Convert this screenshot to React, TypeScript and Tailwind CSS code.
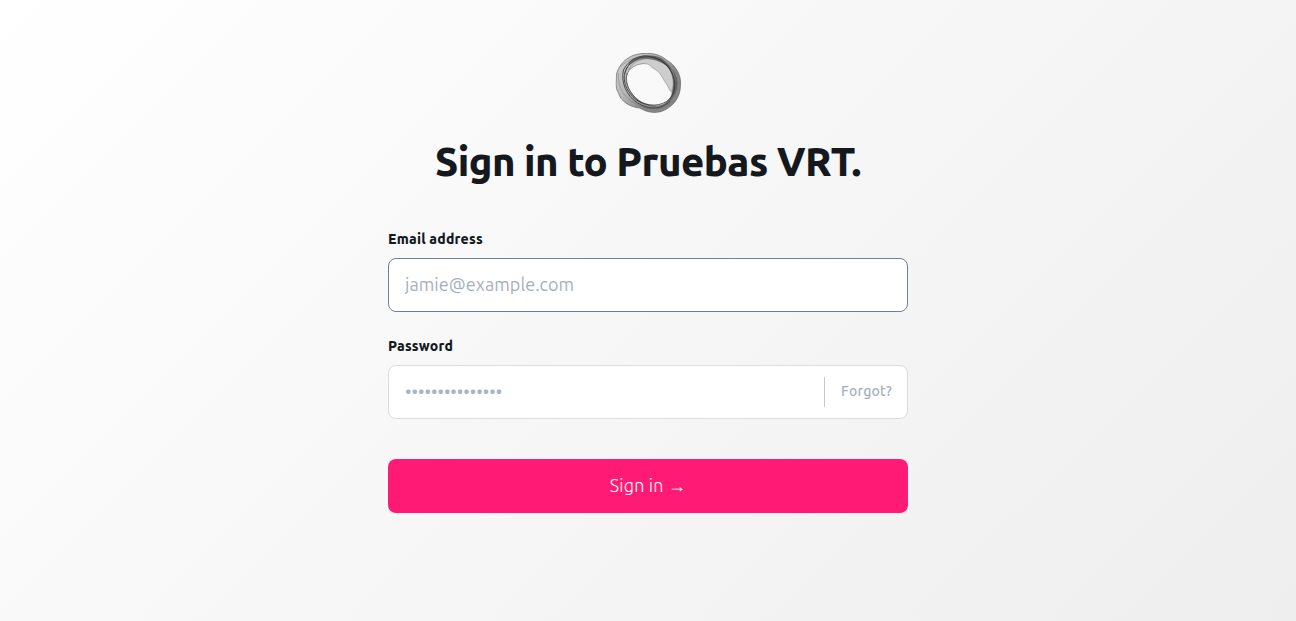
import React from "react";

function RingLogo() {
  return (
    <svg className="translate-x-[0.5px]" width="66" height="60" viewBox="0 0 66 60" fill="none" aria-hidden="true">
      <defs>
        <linearGradient id="ring" x1="0" y1="0" x2="1" y2="0.7">
          <stop offset="0" stopColor="#cfcfcf" />
          <stop offset="0.4" stopColor="#b8b8b8" />
          <stop offset="0.75" stopColor="#868686" />
          <stop offset="1" stopColor="#858585" />
        </linearGradient>
      </defs>
      <path
        fillRule="evenodd"
        fill="url(#ring)"
        stroke="#666"
        strokeWidth="0.7"
        d="M25 .7C35-.5 44 1 51 7C60 12 66 22 65 32C65 45 57 54 47 58C39 61 31 59 24 55C14 54 5 48 3 40C-1 34 1 27 1 21C4 10 13 2 25 .7Z M27 10.500C18 11 11.500 17 10.500 26C11 35 17 44 26 49C35 54 45 54 50 50.500C56 46 57.500 39 57 33C54 24 51 18 43 12C38 9 33 9 27 10.500Z"
      />
      <path
        fill="#cdcdcd"
        stroke="#8a8a8a"
        strokeWidth="0.6"
        d="M13 17C20 11 29 9 34 12C37 16 41 16 44 20C47 24 48 27 51 31C53 34 54 38 56 39C60 29 57 17 48 10C37 3 20 4 13 17Z"
      />
      <path
        fill="#4c4c4c"
        fillOpacity="0.65"
        d="M14 9C20 3 30 1 40 3C47 4 54 11 58 19C51 11 42 7 33 6C24 5 17 9 11 15Z"
      />
      <path
        fill="#505050"
        fillOpacity="0.6"
        d="M27 50C37 56 48 54 55 45C61 37 60 25 57 16C64 26 63 37 57 45C48 55 37 55 27 50Z"
      />
      <g stroke="#303030" strokeWidth="0.9" strokeOpacity="0.9">
        <path d="M8 17C5 29 11 43 22 50C34 57 45 57 55 48" />
        <path d="M12 14C5 25 10 38 21 47C32 54 46 54 54 46C60 40 61 29 56 19C50 8 39 3 28 3C19 4 12 9 8 17" />
        <path d="M9 21C11 12 19 5 29 4C41 3 51 8 56 19C59 26 59 34 57 41" strokeWidth="0.6" />
        <path d="M11.500 20C9 32 16 43 26 50" strokeWidth="0.6" />
      </g>
      <path
        d="M3 20C2 32 7 43 16 48C27 57 45 59 55 50M5 14C15 3 35 0 48 7M61 24C64 39 56 50 44 55"
        stroke="#555"
        strokeOpacity="0.5"
        strokeWidth="0.6"
      />
    </svg>
  );
}

export default function App() {
  return (
    <main className="flex min-h-screen flex-col items-center bg-[linear-gradient(135deg,#ffffff_0%,#eeeeee_100%)] pt-[53px] font-['Ubuntu','Noto_Sans',sans-serif] text-[#15191e]">
      <RingLogo />
      <h1 className="mt-[19px] text-[40px] leading-[60px] font-extrabold tracking-[-0.55px] whitespace-nowrap">
        Sign in to Pruebas VRT.
      </h1>
      <form className="mt-[37px] flex w-[520px] flex-col" onSubmit={(e) => e.preventDefault()}>
        <label htmlFor="email" className="h-5 text-sm leading-5 font-extrabold tracking-[0.2px]">
          Email address
        </label>
        <input
          id="email"
          type="email"
          placeholder="jamie@example.com"
          className="mt-[9px] h-[54px] rounded-lg border border-[#718096] bg-white px-4 pb-[2px] text-lg tracking-[0.06px] outline-none placeholder:text-[#a5b0bf]"
        />
        <label htmlFor="password" className="mt-6 h-5 text-sm leading-5 font-extrabold tracking-[0.2px]">
          Password
        </label>
        <div className="mt-[9px] flex h-[54px] items-center rounded-lg border border-[#dcdcdc] bg-white pr-[15px] pl-4">
          <input
            id="password"
            type="password"
            placeholder="•••••••••••••••"
            className="min-w-0 flex-1 pb-[2px] text-lg outline-none placeholder:text-[#a9b3c1]"
          />
          <a
            href="#forgot"
            className="flex h-[30px] items-center border-l border-[#c5c7ca] pb-[2px] pl-4 text-sm font-medium tracking-[0.26px] text-[#a5b0bf]"
          >
            Forgot?
          </a>
        </div>
        <button
          type="submit"
          className="mt-10 h-[54px] rounded-lg bg-[#ff1a75] pb-[2px] text-lg font-light tracking-[0.2px] text-white"
        >
          Sign in →
        </button>
      </form>
    </main>
  );
}
